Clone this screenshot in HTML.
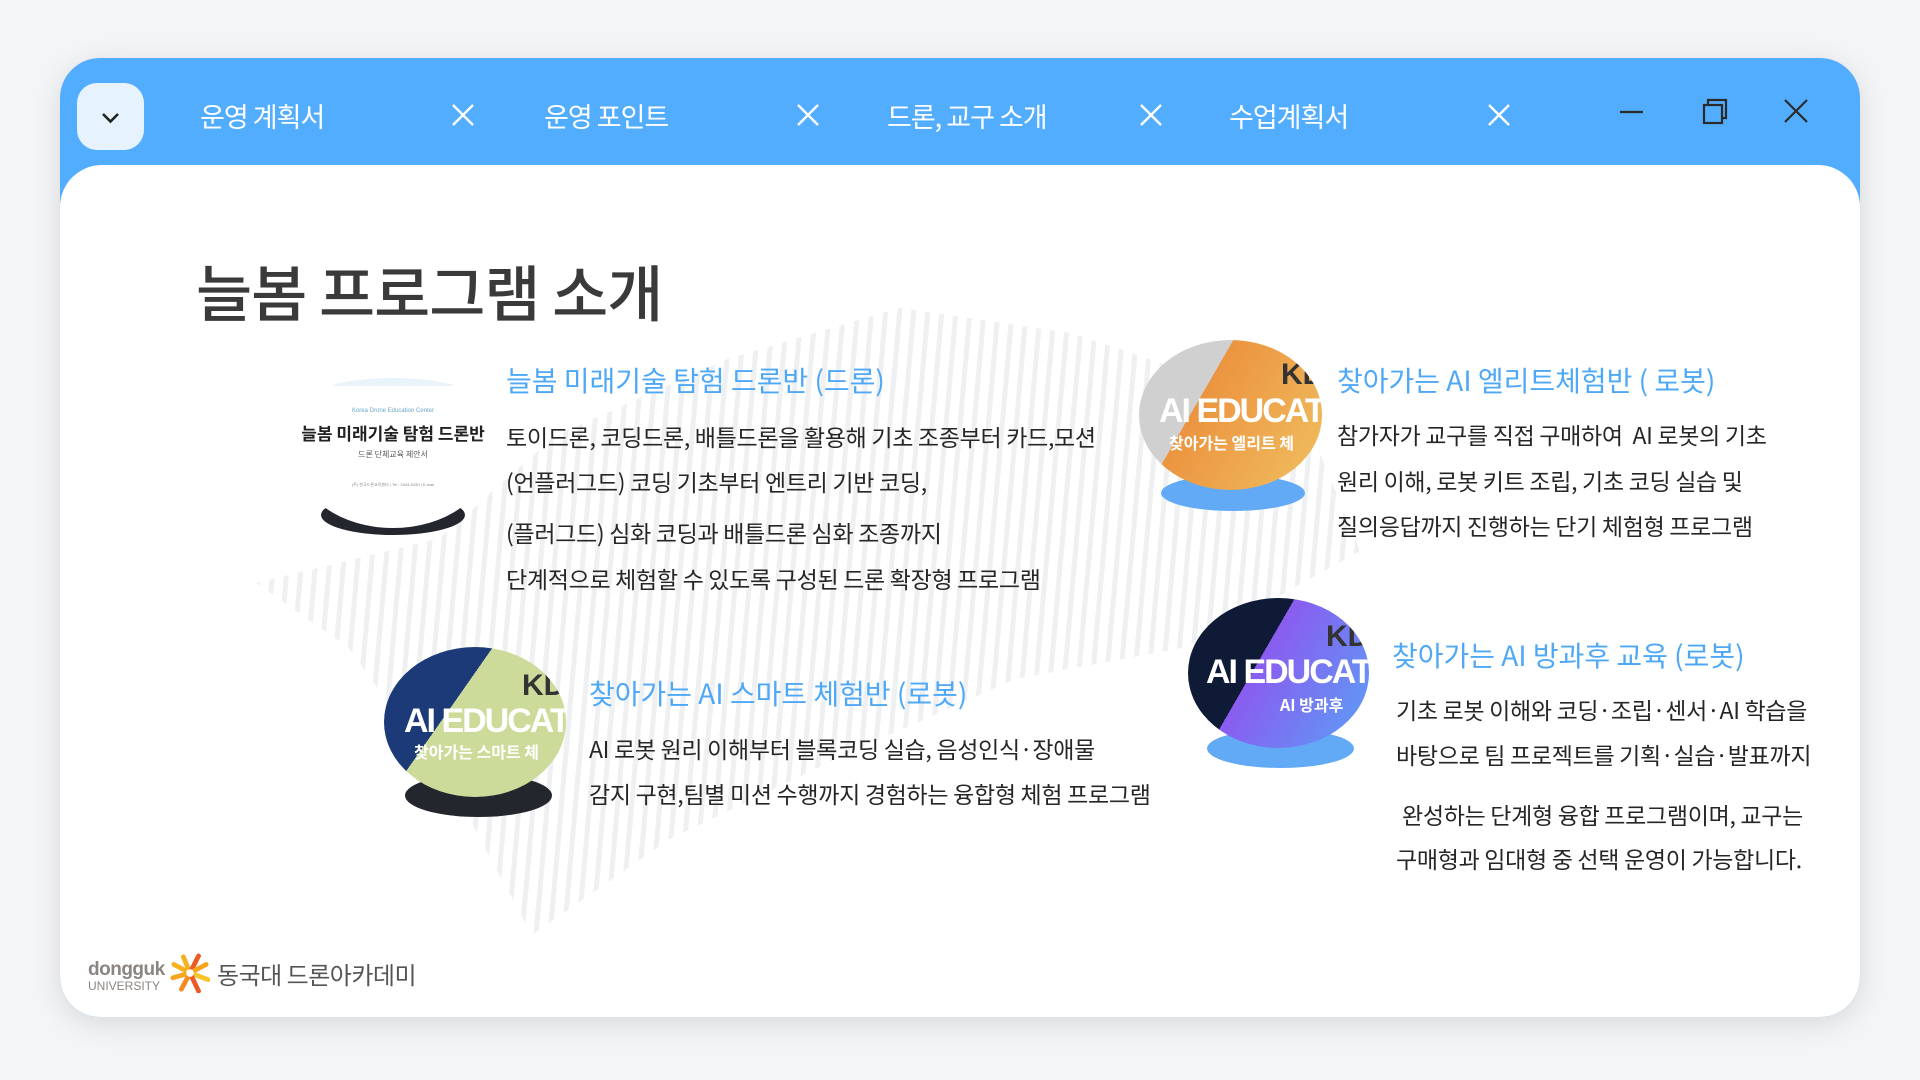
<!DOCTYPE html>
<html><head><meta charset="utf-8"><style>
*{margin:0;padding:0;box-sizing:border-box}
body{width:1920px;height:1080px;background:#f4f5f7;font-family:"Liberation Sans","Noto Sans CJK KR",sans-serif;overflow:hidden;position:relative}
.win{position:absolute;left:60px;top:58px;width:1800px;height:959px;background:#53adff;border-radius:40px;box-shadow:0 6px 30px rgba(0,0,0,.12);overflow:hidden}
.content{position:absolute;left:0;top:107px;width:1800px;height:852px;background:#fff;border-radius:42px 42px 40px 40px;overflow:hidden}
.chev{position:absolute;left:17px;top:25px;width:67px;height:67px;background:#e6f3ff;border-radius:20px}
.tab{position:absolute;top:38px;color:#fff;font-size:27px;letter-spacing:-1px;font-family:"Noto Sans CJK KR",sans-serif}
.x{position:absolute;top:46px}
.ab{position:absolute;font-family:"Noto Sans CJK KR",sans-serif}
.h{color:#4ea8f6;font-size:28px;white-space:nowrap}
.p{color:#262626;font-size:23px;letter-spacing:-0.3px;white-space:nowrap}
.ell{position:absolute;border-radius:50%}
.nw{white-space:nowrap}
.stripes{position:absolute;background:repeating-linear-gradient(95deg,rgba(205,211,219,.35) 0 5px,transparent 5px 14px)}
</style></head><body>
<div class="win">
 <div class="chev"><svg width="67" height="67"><path d="M26 31 L33.5 38.5 L41 31" fill="none" stroke="#222" stroke-width="2.6"/></svg></div>
 <div class="tab" style="left:140px">운영 계획서</div>
 <div class="tab" style="left:484px">운영 포인트</div>
 <div class="tab" style="left:827px">드론, 교구 소개</div>
 <div class="tab" style="left:1169px">수업계획서</div>
 <svg class="x" style="left:392px" width="22" height="22"><path d="M1 1L21 21M21 1L1 21" stroke="#fff" stroke-width="2.4"/></svg>
 <svg class="x" style="left:737px" width="22" height="22"><path d="M1 1L21 21M21 1L1 21" stroke="#fff" stroke-width="2.4"/></svg>
 <svg class="x" style="left:1080px" width="22" height="22"><path d="M1 1L21 21M21 1L1 21" stroke="#fff" stroke-width="2.4"/></svg>
 <svg class="x" style="left:1428px" width="22" height="22"><path d="M1 1L21 21M21 1L1 21" stroke="#fff" stroke-width="2.4"/></svg>
 <svg style="position:absolute;left:1560px;top:40px" width="240" height="30">
  <path d="M0 14H23" stroke="#2a2a2a" stroke-width="2.2"/>
  <rect x="84" y="7" width="18" height="18" fill="none" stroke="#2a2a2a" stroke-width="2.2"/>
  <path d="M88 7V2H106V20H102" fill="none" stroke="#2a2a2a" stroke-width="2.2"/>
  <path d="M165 2L187 24M187 2L165 24" stroke="#2a2a2a" stroke-width="2.2"/>
 </svg>
 <div class="content">
  <div class="stripes" style="left:150px;top:130px;width:1150px;height:640px;clip-path:polygon(4% 45%,20% 38%,30% 22%,45% 10%,60% 2%,75% 6%,95% 18%,100% 40%,85% 55%,70% 60%,55% 72%,40% 85%,28% 100%,22% 80%,12% 55%)"></div>
  <div class="ab" style="left:136px;top:80px;font-size:61px;color:#3a3a3a;letter-spacing:-1px;font-weight:500">늘봄 프로그램 소개</div>

  <!-- img1 -->
  <div class="ell" style="left:261px;top:330px;width:144px;height:40px;background:#23272d"></div>
  <div style="position:absolute;left:238px;top:213px;width:190px;height:150px;background:#fff;border-radius:50% 50% 50% 50%/20% 20% 45% 45%;overflow:hidden;text-align:center">
   <div style="margin:0 auto;width:120px;height:8px;background:#e8f3fa"></div>
   <div style="font-size:6px;color:#6aa7c8;margin-top:22px">Korea Drone Education Center</div>
   <div style="font-size:17px;font-weight:700;color:#222;margin-top:6px;white-space:nowrap;font-family:'Noto Sans CJK KR',sans-serif">늘봄 미래기술 탐험 드론반</div>
   <div style="font-size:8px;color:#555;margin-top:4px;font-family:'Noto Sans CJK KR',sans-serif">드론 단체교육 제안서</div>
   <div style="font-size:4px;color:#888;margin-top:22px">(주) 한국드론교육센터 | Tel : 1544-9150 | E-mail</div>
  </div>
  <div class="ab h" style="left:446px;top:195px">늘봄 미래기술 탐험 드론반 (드론)</div>
  <div class="ab p" style="left:446px;top:254px">토이드론, 코딩드론, 배틀드론을 활용해 기초 조종부터 카드,모션</div>
  <div class="ab p" style="left:446px;top:299px">(언플러그드) 코딩 기초부터 엔트리 기반 코딩,</div>
  <div class="ab p" style="left:446px;top:350px">(플러그드) 심화 코딩과 배틀드론 심화 조종까지</div>
  <div class="ab p" style="left:446px;top:396px">단계적으로 체험할 수 있도록 구성된 드론 확장형 프로그램</div>

  <!-- img2 -->
  <div class="ell" style="left:1101px;top:310px;width:144px;height:36px;background:#62aaf5"></div>
  <div class="ell" style="left:1079px;top:175px;width:183px;height:150px;background:linear-gradient(120deg,#d0d0d0 0 35%,#ec9440 35%,#f0c060 100%);overflow:hidden">
   <div class="nw" style="position:absolute;left:20px;top:52px;color:#fff;font-size:34px;font-weight:900;font-family:'Liberation Sans',sans-serif;letter-spacing:-2px">AI EDUCATIO</div>
   <div class="nw" style="position:absolute;left:30px;top:90px;color:#fff;font-size:16px;font-weight:700;font-family:'Noto Sans CJK KR',sans-serif">찾아가는 엘리트 체</div>
   <div class="nw" style="position:absolute;left:142px;top:18px;color:#333;font-size:30px;font-weight:900">KD</div>
  </div>
  <div class="ab h" style="left:1277px;top:195px">찾아가는 AI 엘리트체험반 ( 로봇)</div>
  <div class="ab p" style="left:1277px;top:252px">참가자가 교구를 직접 구매하여&nbsp; AI 로봇의 기초</div>
  <div class="ab p" style="left:1277px;top:298px">원리 이해, 로봇 키트 조립, 기초 코딩 실습 및</div>
  <div class="ab p" style="left:1277px;top:343px">질의응답까지 진행하는 단기 체험형 프로그램</div>

  <!-- img3 -->
  <div class="ell" style="left:345px;top:609px;width:147px;height:43px;background:#23272d"></div>
  <div class="ell" style="left:324px;top:482px;width:182px;height:150px;background:linear-gradient(125deg,#1d3a78 0 38%,#cddb9a 38%);overflow:hidden">
   <div class="nw" style="position:absolute;left:20px;top:55px;color:#fff;font-size:34px;font-weight:900;letter-spacing:-2px">AI EDUCATIO</div>
   <div class="nw" style="position:absolute;left:30px;top:92px;color:#fff;font-size:16px;font-weight:700;font-family:'Noto Sans CJK KR',sans-serif">찾아가는 스마트 체</div>
   <div class="nw" style="position:absolute;left:138px;top:22px;color:#333;font-size:30px;font-weight:900">KD</div>
  </div>
  <div class="ab h" style="left:529px;top:508px">찾아가는 AI 스마트 체험반 (로봇)</div>
  <div class="ab p" style="left:529px;top:566px">AI 로봇 원리 이해부터 블록코딩 실습, 음성인식·장애물</div>
  <div class="ab p" style="left:529px;top:611px">감지 구현,팀별 미션 수행까지 경험하는 융합형 체험 프로그램</div>

  <!-- img4 -->
  <div class="ell" style="left:1147px;top:564px;width:147px;height:39px;background:#62aaf5"></div>
  <div class="ell" style="left:1128px;top:433px;width:181px;height:150px;background:linear-gradient(120deg,#0e1a36 0 40%,#8a5cf0 40%,#5aa0f5 100%);overflow:hidden">
   <div class="nw" style="position:absolute;left:18px;top:55px;color:#fff;font-size:34px;font-weight:900;letter-spacing:-2px">AI EDUCATIO</div>
   <div class="nw" style="position:absolute;left:92px;top:94px;color:#fff;font-size:16px;font-weight:700;font-family:'Noto Sans CJK KR',sans-serif">AI 방과후</div>
   <div class="nw" style="position:absolute;left:138px;top:22px;color:#333;font-size:30px;font-weight:900">KD</div>
  </div>
  <div class="ab h" style="left:1332px;top:470px">찾아가는 AI 방과후 교육 (로봇)</div>
  <div class="ab p" style="left:1336px;top:527px">기초 로봇 이해와 코딩·조립·센서·AI 학습을</div>
  <div class="ab p" style="left:1336px;top:572px">바탕으로 팀 프로젝트를 기획·실습·발표까지</div>
  <div class="ab p" style="left:1342px;top:632px">완성하는 단계형 융합 프로그램이며, 교구는</div>
  <div class="ab p" style="left:1336px;top:676px">구매형과 임대형 중 선택 운영이 가능합니다.</div>

  <!-- footer -->
  <div class="ab nw" style="left:28px;top:795px;color:#8a8580;font-size:19px;font-weight:700;letter-spacing:-0.5px;font-family:'Liberation Sans',sans-serif;line-height:20px">dongguk</div>
  <div class="ab nw" style="left:28px;top:814px;color:#8a8580;font-size:12px;font-family:'Liberation Sans',sans-serif">UNIVERSITY</div>
  <svg style="position:absolute;left:110px;top:788px" width="40" height="40" viewBox="0 0 42 42">
   <g stroke-linecap="round" stroke-width="5">
    <path d="M21 21L14 4" stroke="#f5b21e"/><path d="M21 21L30 3" stroke="#ef5a24"/><path d="M21 21L38 12" stroke="#f7a51c"/>
    <path d="M21 21L40 28" stroke="#f7c42a"/><path d="M21 21L30 40" stroke="#ef5a24"/><path d="M21 21L12 38" stroke="#f58a1f"/>
    <path d="M21 21L3 26" stroke="#f7a51c"/><path d="M21 21L4 12" stroke="#f5b21e"/>
   </g><circle cx="21" cy="21" r="4" fill="#fff"/>
  </svg>
  <div class="ab nw" style="left:157px;top:791px;color:#555;font-size:24px;letter-spacing:-0.5px">동국대 드론아카데미</div>
 </div>
</div>
</body></html>
